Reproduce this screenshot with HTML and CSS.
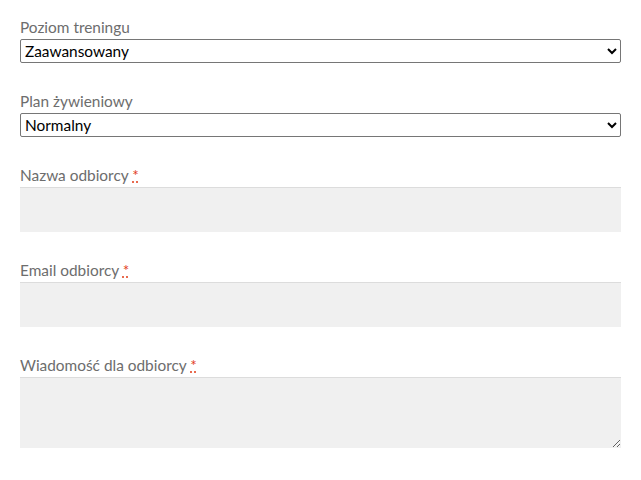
FILE: index.html
```html
<!DOCTYPE html>
<html lang="pl">
<head>
<meta charset="utf-8">
<link rel="stylesheet" href="styles.css">
</head>
<body>
<form class="form">
  <div class="field">
    <label class="label" for="level">Poziom treningu</label>
    <select id="level" class="select">
      <option>Zaawansowany</option>
    </select>
  </div>
  <div class="field">
    <label class="label" for="plan">Plan żywieniowy</label>
    <select id="plan" class="select">
      <option>Normalny</option>
    </select>
  </div>
  <div class="field">
    <label class="label" for="name">Nazwa odbiorcy&nbsp;<abbr class="required" title="wymagane">*</abbr></label>
    <input id="name" class="input" type="text">
  </div>
  <div class="field">
    <label class="label" for="email">Email odbiorcy&nbsp;<abbr class="required" title="wymagane">*</abbr></label>
    <input id="email" class="input" type="email">
  </div>
  <div class="field">
    <label class="label" for="msg">Wiadomość dla odbiorcy&nbsp;<abbr class="required" title="wymagane">*</abbr></label>
    <textarea id="msg" class="textarea"></textarea>
  </div>
</form>
</body>
</html>
```
FILE: styles.css
```css
html, body {
  margin: 0;
  padding: 0;
  background: #fff;
}
body {
  font-family: Lato, "Liberation Sans", sans-serif;
  font-size: 15.4px;
  color: #6d6d6d;
}
.form {
  display: flex;
  flex-direction: column;
  gap: 26px;
  padding: 15px 20px 0;
}
.field {
  display: flex;
  flex-direction: column;
}
.label {
  display: block;
  height: 24px;
  line-height: 24px;
  color: #6d6d6d;
}
.required {
  color: #e2401c;
  text-decoration: underline dotted;
  text-decoration-color: #e2401c;
  cursor: help;
}
.select {
  box-sizing: border-box;
  width: 100%;
  height: 24px;
  font-family: Lato, "Liberation Sans", sans-serif;
  font-size: 15.4px;
  color: #000;
  background: #fff;
  border: 1px solid #767676;
  border-radius: 2px;
  padding: 0;
  margin: 0;
}
.input,
.textarea {
  box-sizing: border-box;
  width: 100%;
  margin: 0;
  border: 0;
  border-top: 1px solid #dcdcdc;
  background: #f0f0f0;
  font-family: Lato, "Liberation Sans", sans-serif;
  font-size: 15.4px;
  color: #43454b;
  padding: 8px;
}
.input {
  height: 45px;
}
.textarea {
  height: 71px;
  display: block;
}
```
